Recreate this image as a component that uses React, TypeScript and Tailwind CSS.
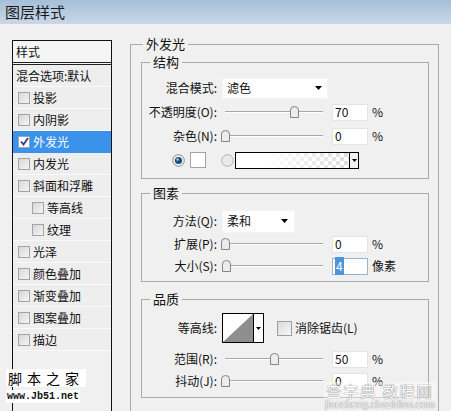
const LIST = [
  { label: "投影" },
  { label: "内阴影" },
  { label: "外发光", checked: true, active: true },
  { label: "内发光" },
  { label: "斜面和浮雕" },
  { label: "等高线", indent: true },
  { label: "纹理", indent: true },
  { label: "光泽" },
  { label: "颜色叠加" },
  { label: "渐变叠加" },
  { label: "图案叠加" },
  { label: "描边" },
];

function Check({ checked }: { checked?: boolean }) {
  return (
    <span
      className={`flex h-[12px] w-[12px] shrink-0 items-center justify-center border border-[#a3a3a3] ${
        checked ? "bg-white" : "bg-gradient-to-br from-[#d6d6d6] to-[#f6f6f6]"
      }`}
    >
      {checked && (
        <svg width="9" height="9" viewBox="0 0 9 9">
          <path d="M1 4.5 L3.5 7.5 L8 1" fill="none" stroke="#2b3a8c" strokeWidth="1.8" />
        </svg>
      )}
    </span>
  );
}

function Arrow() {
  return (
    <svg width="7" height="4" viewBox="0 0 7 4">
      <path d="M0 0 H7 L3.5 4 Z" fill="#000" />
    </svg>
  );
}

function Slider({ pct }: { pct: number }) {
  return (
    <div className="relative h-full w-[106px]">
      <div className="absolute left-[3px] right-[5px] top-[11px] h-[2px] border-t border-b border-t-[#a8a8a8] border-b-white" />
      <svg
        className="absolute top-[6px]"
        style={{ left: 3 + pct * 98 - 4 }}
        width="9"
        height="12"
        viewBox="0 0 9 12"
      >
        <path
          d="M0.5 11.5 V4 Q0.5 0.5 4.5 0.5 Q8.5 0.5 8.5 4 V11.5 Z"
          fill="#ececec"
          stroke="#858585"
        />
      </svg>
    </div>
  );
}

function Num({ value, focus }: { value: string; focus?: boolean }) {
  return (
    <div
      className={`ml-[4px] flex h-[17px] w-[36px] items-center border bg-white pl-[2px] ${
        focus ? "border-[#9bb3cc]" : "border-[#e4e4e4]"
      }`}
    >
      {focus ? <span className="bg-[#4d94db] px-px text-white">{value}</span> : value}
    </div>
  );
}

function Label({ children }: { children: React.ReactNode }) {
  return <div className="w-[75px] shrink-0 text-right">{children}</div>;
}

function SliderRow({
  label,
  pct,
  value,
  unit,
  focus,
  h = "h-[24px]",
}: {
  label: string;
  pct: number;
  value: string;
  unit: string;
  focus?: boolean;
  h?: string;
}) {
  return (
    <div className={`flex items-center ${h}`}>
      <Label>{label}</Label>
      <div className="ml-[5px] flex h-[24px] items-center">
        <Slider pct={pct} />
        <Num value={value} focus={focus} />
        <span className="ml-[4px]">{unit}</span>
      </div>
    </div>
  );
}

function Radio({ on }: { on?: boolean }) {
  return (
    <svg width="13" height="13" viewBox="0 0 13 13" className="shrink-0">
      <circle cx="6.5" cy="6.5" r="5.8" fill={on ? "#f2f2f2" : "#e9e9e9"} stroke={on ? "#7f8a96" : "#b3b3b3"} />
      {on && (
        <>
          <circle cx="6.5" cy="6.5" r="3.6" fill="#1c4f7e" />
          <circle cx="5.6" cy="5.6" r="1.3" fill="#8fc3ee" />
        </>
      )}
    </svg>
  );
}

export default function App() {
  return (
    <div className="relative h-[411px] w-[451px] overflow-hidden bg-[#f0f0f0] font-['Noto_Sans_CJK_SC','Noto_Sans',sans-serif] text-[12px] text-[#111]">
      <div className="flex h-[24px] items-center bg-gradient-to-b from-[#a6bed8] to-[#c9d8e8] pl-[5px] text-[15px] text-[#1a1a1a]">
        图层样式
      </div>

      <div className="flex items-start">
        {/* style list */}
        <div className="ml-[12px] mt-[16px] h-[400px] w-[100px] shrink-0 border border-[#111] bg-[#f0f0f0]">
          <div className="flex h-[24px] items-center border-b-[3px] border-double border-[#222] bg-[#f5f5f5] pl-[3px]">
            样式
          </div>
          <div className="flex h-[22px] items-center border-b border-[#fafafa] bg-[#eeeeee] pl-[3px]">
            混合选项:默认
          </div>
          {LIST.map((item) => (
            <div
              key={item.label}
              className={`flex h-[22px] items-center gap-[3px] border-b ${
                item.active ? "border-[#3b92ea] bg-[#3b92ea] text-white" : "border-[#fafafa] bg-[#eeeeee]"
              } ${item.indent ? "pl-[19px]" : "pl-[5px]"}`}
            >
              <Check checked={item.checked} />
              <span>{item.label}</span>
            </div>
          ))}
        </div>

        {/* outer glow */}
        <fieldset className="ml-[18px] mt-[12px] h-[420px] w-[309px] shrink-0 border border-[#a9a9a9] pl-[10px]">
          <legend className="ml-[2px] px-[3px] text-[13px] leading-[16px]">外发光</legend>

          <fieldset className="mt-[2px] w-[288px] border border-[#a9a9a9] pb-[6px] pt-[6px]">
            <legend className="ml-[8px] px-[3px] text-[13px] leading-[16px]">结构</legend>
            <div className="flex h-[24px] items-center">
              <Label>混合模式:</Label>
              <div className="ml-[5px] flex h-[21px] w-[106px] items-center justify-between border border-[#f4f4f4] bg-white pl-[4px] pr-[5px]">
                <span>滤色</span>
                <Arrow />
              </div>
            </div>
            <SliderRow label="不透明度(O):" pct={0.7} value="70" unit="%" />
            <SliderRow label="杂色(N):" pct={0} value="0" unit="%" />
            <div className="flex h-[24px] items-center pl-[30px]">
              <Radio on />
              <div className="ml-[5px] h-[16px] w-[16px] border border-[#a5a5a5] bg-white" />
              <div className="ml-[15px]">
                <Radio />
              </div>
              <div className="ml-[1px] flex h-[17px] border border-black">
                <div className="relative w-[113px] bg-[repeating-conic-gradient(#dcdcdc_0_25%,#ffffff_0_50%)] bg-[length:8px_8px]">
                  <div className="absolute inset-0 bg-gradient-to-r from-white from-[25%] to-transparent" />
                </div>
                <div className="flex w-[9px] items-center justify-center border-l border-black bg-[#f2f2f2]">
                  <svg width="5" height="3" viewBox="0 0 5 3">
                    <path d="M0 0 H5 L2.5 3 Z" fill="#000" />
                  </svg>
                </div>
              </div>
            </div>
          </fieldset>

          <fieldset className="mt-[6px] w-[288px] border border-[#a9a9a9] pb-[4px] pt-[8px]">
            <legend className="ml-[8px] px-[3px] text-[13px] leading-[16px]">图素</legend>
            <div className="flex h-[24px] items-center">
              <Label>方法(Q):</Label>
              <div className="ml-[5px] flex h-[23px] w-[73px] items-center justify-between border border-[#f4f4f4] bg-white pl-[4px] pr-[6px]">
                <span>柔和</span>
                <Arrow />
              </div>
            </div>
            <SliderRow label="扩展(P):" pct={0} value="0" unit="%" h="h-[22px]" />
            <SliderRow label="大小(S):" pct={0.005} value="4" unit="像素" focus h="h-[22px]" />
          </fieldset>

          <fieldset className="mt-[9px] w-[288px] border border-[#a9a9a9] pb-[5px] pt-[5px]">
            <legend className="ml-[8px] px-[3px] text-[13px] leading-[16px]">品质</legend>
            <div className="flex h-[32px] items-center">
              <Label>等高线:</Label>
              <div className="ml-[5px] flex h-[30px] border border-black">
                <svg width="30" height="28" viewBox="0 0 30 28" className="bg-white">
                  <path d="M0 28 L30 0 V28 Z" fill="#8e8e8e" />
                </svg>
                <div className="flex w-[10px] items-center justify-center border-l border-black bg-white">
                  <svg width="5" height="3" viewBox="0 0 5 3">
                    <path d="M0 0 H5 L2.5 3 Z" fill="#000" />
                  </svg>
                </div>
              </div>
              <div className="ml-[13px] flex items-center gap-[3px]">
                <span className="h-[15px] w-[15px] border border-[#9c9c9c] bg-gradient-to-br from-[#d9d9d9] to-[#f8f8f8]" />
                <span>消除锯齿(L)</span>
              </div>
            </div>
            <div className="mt-[4px]">
              <SliderRow label="范围(R):" pct={0.5} value="50" unit="%" h="h-[22px]" />
              <SliderRow label="抖动(J):" pct={0} value="0" unit="%" h="h-[22px]" />
            </div>
          </fieldset>
        </fieldset>
      </div>

      {/* watermarks */}
      <div className="absolute left-[6px] top-[369px] flex flex-col items-start">
        <span className="bg-white px-[2px] text-[14px] leading-[18px] tracking-[5px] text-black">脚本之家</span>
        <span className="mt-[3px] bg-white px-[1px] font-['Liberation_Mono',monospace] text-[10px] font-bold leading-[13px] text-[#111]">
          www.Jb51.net
        </span>
      </div>
      <div className="absolute left-[320px] top-[382px] flex w-[120px] flex-col items-center">
        <span className="whitespace-nowrap bg-white/40 px-[2px] text-[15px] leading-[17px] tracking-[2px] text-white [text-shadow:0_0_1px_#777,0_0_1px_#777]">
          查字典 教程网
        </span>
        <span className="whitespace-nowrap font-['Liberation_Sans',sans-serif] text-[10px] leading-[11px] text-white [text-shadow:0_0_1px_#888,0_0_1px_#888]">
          jiaocheng.chazidian.com
        </span>
      </div>
    </div>
  );
}
